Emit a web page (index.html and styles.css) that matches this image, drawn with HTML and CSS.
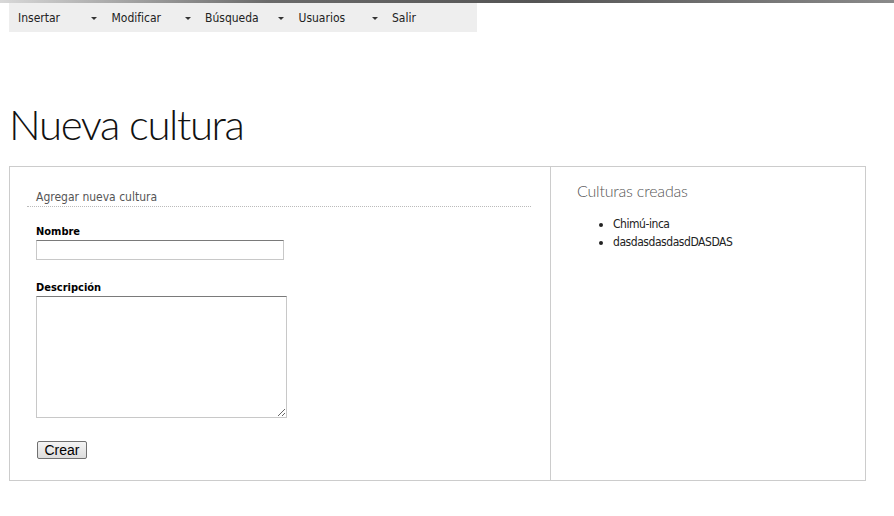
FILE: index.html
```html
<!DOCTYPE html>
<html lang="es">
<head>
<meta charset="utf-8">
<title>Nueva cultura</title>
<link rel="stylesheet" href="styles.css">
</head>
<body>
<div class="topline"></div>
<div class="page">
  <nav class="menu">
    <div class="menu-item"><span>Insertar</span><span class="caret"></span></div>
    <div class="menu-item"><span>Modificar</span><span class="caret"></span></div>
    <div class="menu-item"><span>Búsqueda</span><span class="caret"></span></div>
    <div class="menu-item"><span>Usuarios</span><span class="caret"></span></div>
    <div class="menu-item"><span>Salir</span></div>
  </nav>
  <h1 class="title">Nueva cultura</h1>
  <div class="box">
    <div class="col-left">
      <div class="section-head">Agregar nueva cultura</div>
      <form class="form">
        <label class="label">Nombre</label>
        <input class="input" type="text">
        <label class="label label-gap">Descripción</label>
        <textarea class="textarea"></textarea>
        <button type="button" class="btn">Crear</button>
      </form>
    </div>
    <div class="col-right">
      <h2 class="side-title">Culturas creadas</h2>
      <ul class="list">
        <li>Chimú-inca</li>
        <li>dasdasdasdasdDASDAS</li>
      </ul>
    </div>
  </div>
</div>
</body>
</html>
```
FILE: styles.css
```css
html, body {
  margin: 0;
  padding: 0;
  background: #fff;
}
body {
  font-family: "DejaVu Sans Condensed", "DejaVu Sans", sans-serif;
  color: #222;
}
.topline {
  height: 3px;
  background: linear-gradient(to right, #d8d8d8 0%, #6a6a6a 30%, #555 60%, #8a8a8a 100%);
}
.page {
  padding: 0 28px 0 9px;
}
.menu {
  display: flex;
  width: 468px;
  height: 29px;
  background: #eeeeee;
  box-sizing: border-box;
  padding-left: 9px;
  align-items: center;
}
.menu-item {
  width: 93.5px;
  display: flex;
  align-items: center;
  font-size: 12px;
  color: #222;
  position: relative;
  flex: none;
}
.caret {
  position: absolute;
  left: 73px;
  top: 6px;
  width: 0;
  height: 0;
  border-left: 3.5px solid transparent;
  border-right: 3.5px solid transparent;
  border-top: 3px solid #333;
}
.title {
  margin: 67px 0 17px 0;
  font-family: Lato, "Open Sans", sans-serif;
  font-weight: 300;
  font-size: 42px;
  line-height: 50px;
  color: #111;
  letter-spacing: -1.4px;
}
.box {
  display: flex;
  border: 1px solid #cccccc;
  height: 315px;
  box-sizing: border-box;
}
.col-left {
  width: 541px;
  border-right: 1px solid #cccccc;
  padding: 22px 19px 0 17px;
  box-sizing: border-box;
}
.section-head {
  font-size: 12px;
  line-height: 16px;
  color: #555;
  padding: 0 0 1px 9px;
  border-bottom: 1px dotted #bbb;
}
.form {
  display: flex;
  flex-direction: column;
  align-items: flex-start;
  padding-left: 9px;
  margin-top: 18px;
}
.label {
  font-size: 11px;
  line-height: 14px;
  font-weight: bold;
  color: #000;
  margin-bottom: 1px;
}
.label-gap {
  margin-top: 21px;
}
.input {
  width: 248px;
  height: 20px;
  box-sizing: border-box;
  border: 1px solid #c8c8c8;
  border-top-color: #7a7a7a;
  margin: 0;
  padding: 1px 2px;
}
.textarea {
  width: 251px;
  height: 122px;
  box-sizing: border-box;
  border: 1px solid #c8c8c8;
  border-top-color: #7a7a7a;
  margin: 0;
  padding: 2px;
}
.btn {
  margin: 23px 0 0 1px;
  height: 18px;
  width: 50px;
  padding: 0;
  font-family: "Liberation Sans", Arial, sans-serif;
  font-size: 14px;
  line-height: 16px;
  color: #000;
  background: linear-gradient(#f4f4f4, #dcdcdc);
  border: 1px solid #707070;
  border-radius: 2px;
}
.col-right {
  flex: 1;
  padding: 14px 0 0 26px;
}
.side-title {
  margin: 0;
  font-family: Lato, "Open Sans", sans-serif;
  font-weight: 300;
  font-size: 16px;
  line-height: 20px;
  color: #555;
  letter-spacing: -0.2px;
}
.list {
  margin: 14px 0 0 0;
  padding: 0 0 0 36px;
  font-size: 12px;
  line-height: 18px;
  color: #222;
  letter-spacing: -0.45px;
}
```
